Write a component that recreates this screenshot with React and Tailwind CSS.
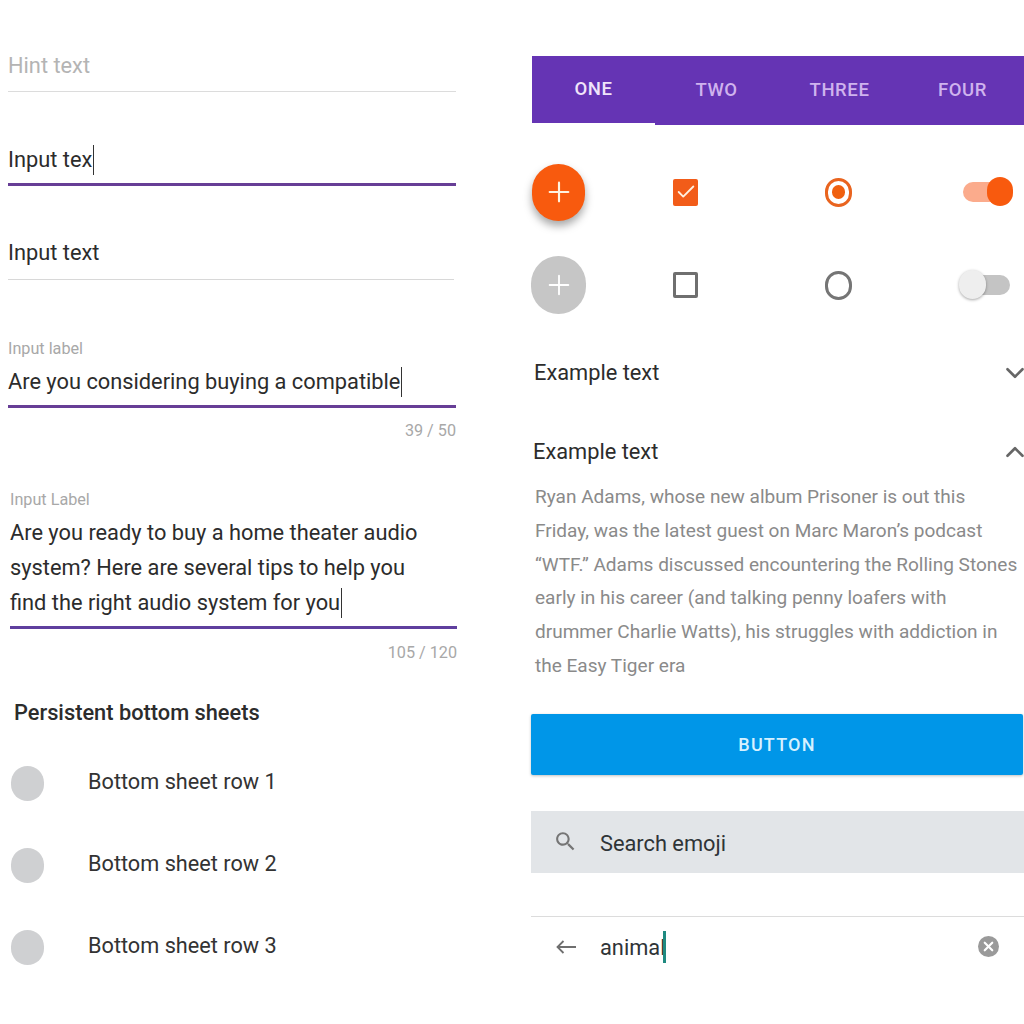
import { Check, ChevronDown, ChevronUp, Plus, X } from "lucide-react";

const font = { fontFamily: "Roboto, sans-serif" };

const Caret = ({ className = "ml-px h-[30px] w-px bg-[#333]" }) => (
  <span className={`inline-block shrink-0 ${className}`} />
);

const SheetRow = ({ label, className = "" }) => (
  <div className={`flex h-[36px] items-center ${className}`}>
    <span className="ml-[11px] mt-[3px] h-[35px] w-[33px] rounded-full bg-[#cfd0d2]" />
    <span className="ml-[44px] text-[21.7px] text-[#333]">{label}</span>
  </div>
);

const Tab = ({ label, active = false }) => (
  <div
    className={`flex w-[123px] items-center justify-center text-[18.5px] font-medium tracking-[0.6px] ${
      active
        ? "h-[67px] text-[#f0e4fa]"
        : "h-[69px] bg-[#6534b4] text-[#cfb3ee]"
    }`}
  >
    {label}
  </div>
);

const Toggle = ({ on }) => (
  <div className="relative h-[20px] w-[46px]">
    <div
      className={`h-[20px] rounded-full ${
        on ? "w-[46px] bg-[#fbab8c]" : "ml-[12px] w-[39px] bg-[#c4c4c4]"
      }`}
    />
    <div
      className={`absolute -top-[5px] h-[29px] rounded-full ${
        on
          ? "left-[24px] w-[26px] bg-[#f85a0e]"
          : "left-0 w-[27px] bg-[#eeeeee] shadow-[0_1px_3px_rgba(0,0,0,0.35)]"
      }`}
    />
  </div>
);

export default function App() {
  return (
    <div className="flex h-[1024px] w-[1024px] overflow-hidden bg-white" style={font}>
      {/* left column: text fields and sheet */}
      <div className="ml-[8px] w-[449px] shrink-0">
        <div className="mt-[50px] flex h-[32px] items-center text-[21.8px] text-[#b4b4b4]">
          Hint text
        </div>
        <div className="mt-[9px] h-px w-[448px] bg-[#dcdcdc]" />

        <div className="mt-[52px] flex h-[32px] items-center text-[21.8px] text-[#2c2c2c]">
          Input tex
          <Caret />
        </div>
        <div className="mt-[7px] h-[3px] w-[448px] bg-[#673e96]" />

        <div className="mt-[51px] flex h-[32px] items-center text-[21.8px] text-[#2c2c2c]">
          Input text
        </div>
        <div className="mt-[10px] h-px w-[446px] bg-[#d8d8d8]" />

        <div className="mt-[59px] flex h-[20px] items-center text-[16.2px] text-[#a8a8a8]">
          Input label
        </div>
        <div className="mt-[7px] flex h-[32px] items-center text-[21.8px] text-[#2c2c2c]">
          Are you considering buying a compatible
          <Caret />
        </div>
        <div className="mt-[7px] h-[3px] w-[448px] bg-[#673e96]" />
        <div className="mt-[13px] flex h-[20px] w-[448px] items-center justify-end text-[16.2px] text-[#a8a8a8]">
          39 / 50
        </div>

        <div className="mt-[49px] ml-[2px] flex h-[20px] items-center text-[16.2px] text-[#a8a8a8]">
          Input Label
        </div>
        <div className="mt-[5px] ml-[2px] text-[21.8px] leading-[35px] text-[#2c2c2c]">
          <div>Are you ready to buy a home theater audio</div>
          <div>system? Here are several tips to help you</div>
          <div className="flex items-center">
            find the right audio system for you
            <Caret />
          </div>
        </div>
        <div className="mt-[6px] ml-[2px] h-[3px] w-[447px] bg-[#5f3f9e]" />
        <div className="mt-[14px] flex h-[20px] w-[449px] items-center justify-end text-[16.2px] text-[#a8a8a8]">
          105 / 120
        </div>

        <div className="mt-[34px] ml-[6px] flex h-[32px] items-center text-[21.8px] font-medium text-[#2c2c2c]">
          Persistent bottom sheets
        </div>
        <div className="-ml-[8px]">
          <SheetRow label="Bottom sheet row 1" className="mt-[35px]" />
          <SheetRow label="Bottom sheet row 2" className="mt-[46px]" />
          <SheetRow label="Bottom sheet row 3" className="mt-[46px]" />
        </div>
      </div>

      {/* right column: controls */}
      <div className="ml-[75px] w-[492px] shrink-0 pt-[56px]">
        <div className="flex items-start bg-white">
          <div className="bg-[#6534b4]">
            <Tab label="ONE" active />
          </div>
          <Tab label="TWO" />
          <Tab label="THREE" />
          <Tab label="FOUR" />
        </div>

        <div className="mt-[38px] flex h-[58px] items-center">
          <div className="flex h-[57px] w-[53px] items-center justify-center rounded-full bg-[#f85a0e] shadow-[0_5px_8px_rgba(0,0,0,0.35)]">
            <Plus size={32} strokeWidth={1.6} className="text-[#fff3e0]" />
          </div>
          <div className="ml-[88px] flex h-[27px] w-[25px] items-center justify-center rounded-[2px] bg-[#f25c19]">
            <Check size={22} strokeWidth={2} className="text-[#fff0e0]" />
          </div>
          <div className="ml-[127px] flex h-[29px] w-[27px] items-center justify-center rounded-full border-[3px] border-[#e9641f]">
            <div className="h-[14px] w-[13px] rounded-full bg-[#f0600f]" />
          </div>
          <div className="ml-[111px]">
            <Toggle on />
          </div>
        </div>

        <div className="mt-[35px] flex h-[58px] items-center">
          <div className="-ml-px flex h-[58px] w-[55px] items-center justify-center rounded-full bg-[#c6c6c6]">
            <Plus size={32} strokeWidth={1.4} className="text-white" />
          </div>
          <div className="ml-[87px] h-[26px] w-[25px] rounded-[2px] border-[3px] border-[#6f6f6f]" />
          <div className="ml-[127px] h-[29px] w-[27px] rounded-full border-[3px] border-[#757575]" />
          <div className="ml-[107px]">
            <Toggle on={false} />
          </div>
        </div>

        <div className="mt-[43px] flex h-[32px] items-center justify-between text-[21.8px] text-[#2c2c2c]">
          <span className="ml-[2px]">Example text</span>
          <ChevronDown size={30} strokeWidth={2.1} className="-mr-[6px] text-[#666]" />
        </div>
        <div className="mt-[47px] flex h-[32px] items-center justify-between text-[21.8px] text-[#2c2c2c]">
          <span className="ml-[1px]">Example text</span>
          <ChevronUp size={30} strokeWidth={2.1} className="-mr-[6px] text-[#666]" />
        </div>

        <div className="mt-[12px] ml-[3px] whitespace-nowrap text-[19.05px] leading-[33.8px] text-[#8a8a8a]">
          <div>Ryan Adams, whose new album Prisoner is out this</div>
          <div>Friday, was the latest guest on Marc Maron’s podcast</div>
          <div>“WTF.” Adams discussed encountering the Rolling Stones</div>
          <div>early in his career (and talking penny loafers with</div>
          <div>drummer Charlie Watts), his struggles with addiction in</div>
          <div>the Easy Tiger era</div>
        </div>

        <div className="mt-[31px] -ml-px flex h-[61px] w-[492px] items-center justify-center rounded-[2px] bg-[#0096e8] text-[18px] font-medium tracking-[1.2px] text-[#d6f1ff] shadow-[0_1px_3px_rgba(0,0,0,0.25)]">
          BUTTON
        </div>

        <div className="mt-[36px] -ml-px flex h-[62px] w-[493px] items-center bg-[#e2e5e8]">
          <svg viewBox="0 0 24 24" width="25" height="25" fill="#757575" className="ml-[22px]">
            <path d="M15.5 14h-.79l-.28-.27C15.41 12.59 16 11.11 16 9.5 16 5.91 13.09 3 9.5 3S3 5.91 3 9.5 5.91 16 9.5 16c1.61 0 3.09-.59 4.23-1.57l.27.28v.79l5 4.99L20.49 19l-4.99-5zm-6 0C7.01 14 5 11.99 5 9.5S7.01 5 9.5 5 14 7.01 14 9.5 11.99 14 9.5 14z" />
          </svg>
          <span className="ml-[22px] pt-[5px] text-[21.8px] text-[#2f3437]">Search emoji</span>
        </div>

        <div className="mt-[43px] -ml-px h-px w-[493px] bg-[#dcdcdc]" />
        <div className="mt-[14px] -ml-px flex h-[32px] w-[493px] items-center">
          <svg viewBox="0 0 20 14" width="20" height="14" fill="none" stroke="#6f6f6f" strokeWidth="1.8" className="ml-[25px]">
            <path d="M1 7H20M7.5 1L1.5 7L7.5 13" />
          </svg>
          <span className="ml-[24px] pt-[3px] text-[21.8px] text-[#2f3437]">animal</span>
          <Caret className="-ml-[2px] h-[32px] w-[3px] bg-[#1f8a80]" />
          <div className="ml-auto mr-[25px] flex h-[21px] w-[21px] items-center justify-center rounded-full bg-[#9a9a9a]">
            <X size={15} strokeWidth={3.5} className="text-white" />
          </div>
        </div>
      </div>
    </div>
  );
}
